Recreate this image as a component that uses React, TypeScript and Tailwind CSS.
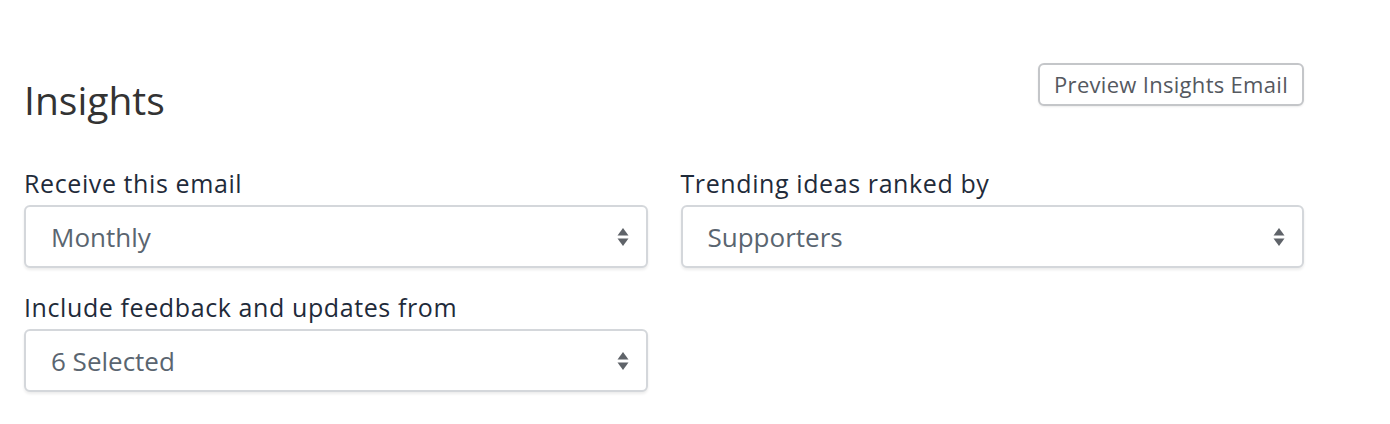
import { useState } from "react";

function SortArrows() {
  return (
    <svg width="12" height="20" viewBox="0 0 12 20" className="shrink-0">
      <path d="M6 1 L11.5 8.5 H0.5 Z" fill="#5f6369" />
      <path d="M6 19 L11.5 11.5 H0.5 Z" fill="#5f6369" />
    </svg>
  );
}

function SelectBox({
  label,
  value,
  options,
  onChange,
}: {
  label: string;
  value: string;
  options: string[];
  onChange: (v: string) => void;
}) {
  return (
    <div>
      <label className="block text-[25px] leading-[28px] tracking-[0.6px] text-[#1f2b3a]">
        {label}
      </label>
      <div className="relative mt-[8px]">
        <select
          value={value}
          onChange={(e) => onChange(e.target.value)}
          className="h-[63px] w-full appearance-none rounded-[6px] border-2 border-[#d4d7db] bg-white pl-[25px] pr-12 pt-[2px] text-[26px] text-[#5a6570] shadow-[0_2px_3px_rgba(0,0,0,0.08)] focus:outline-none"
        >
          {options.map((o) => (
            <option key={o}>{o}</option>
          ))}
        </select>
        <div className="pointer-events-none absolute right-[19px] top-1/2 -translate-y-1/2">
          <SortArrows />
        </div>
      </div>
    </div>
  );
}

export default function App() {
  const [frequency, setFrequency] = useState("Monthly");
  const [ranking, setRanking] = useState("Supporters");
  const [sources, setSources] = useState("6 Selected");

  return (
    <div
      className="min-h-[424px] bg-white px-6 pt-[63px]"
      style={{ fontFamily: '"Open Sans", "Liberation Sans", sans-serif' }}
    >
      <div className="w-[1280px]">
        <div className="flex items-start justify-between">
          <h1 className="mt-[14px] text-[39px] leading-[46px] text-[#333333]">
            Insights
          </h1>
          <button className="h-[43px] rounded-[6px] border-2 border-[#c4c6c9] bg-white px-[14px] text-[22px] tracking-[0.3px] text-[#55595f] shadow-[0_1px_2px_rgba(0,0,0,0.08)]">
            Preview Insights Email
          </button>
        </div>

        <div className="mt-[46px] grid grid-cols-2 gap-x-[33px] gap-y-[25px]">
          <SelectBox
            label="Receive this email"
            value={frequency}
            options={["Daily", "Weekly", "Monthly"]}
            onChange={setFrequency}
          />
          <SelectBox
            label="Trending ideas ranked by"
            value={ranking}
            options={["Supporters", "Comments", "Votes"]}
            onChange={setRanking}
          />
          <SelectBox
            label="Include feedback and updates from"
            value={sources}
            options={["6 Selected", "All"]}
            onChange={setSources}
          />
        </div>
      </div>
    </div>
  );
}
